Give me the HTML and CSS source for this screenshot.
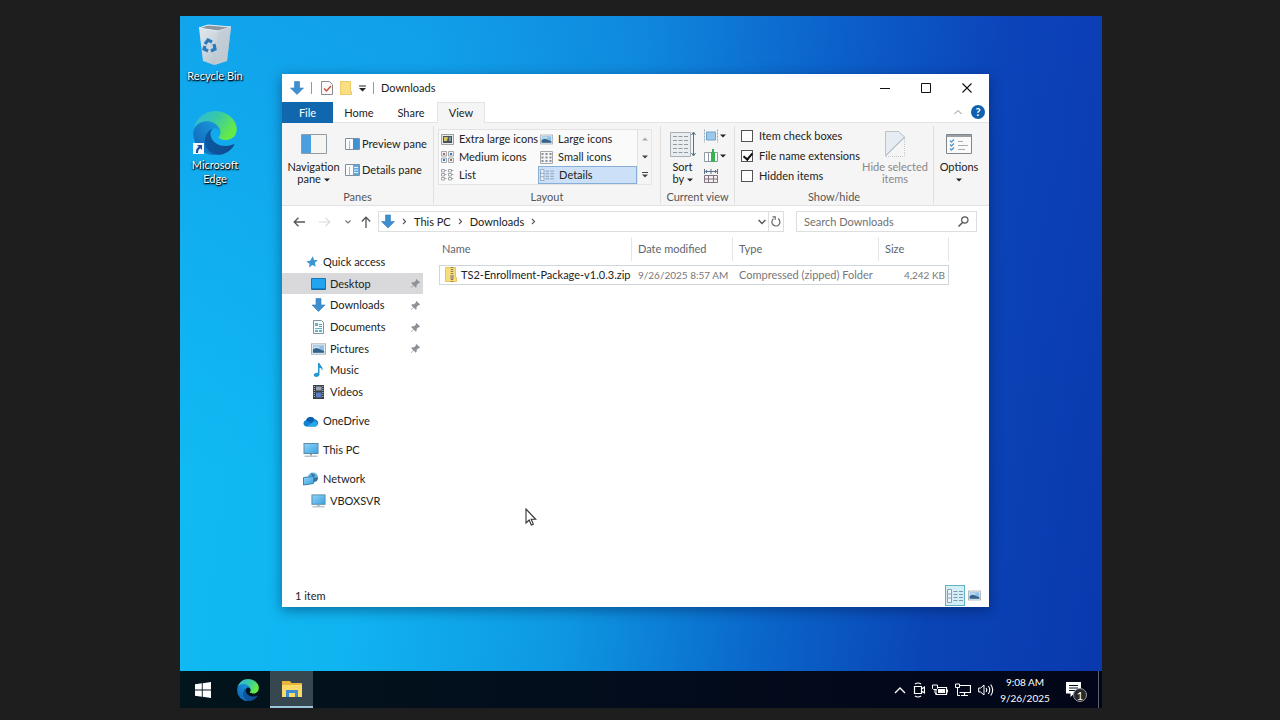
FILE: index.html
```html
<!DOCTYPE html>
<html lang="en">
<head>
    <meta charset="UTF-8">
    <title>Downloads</title>
    <link rel="stylesheet" href="styles.css">
</head>
<body>
    <!-- shared icons -->
    <svg class="defs" width="0" height="0">
        <defs>
            <linearGradient id="edge-a" x1="0" y1="0" x2="1" y2="0"><stop offset="0" stop-color="#0c59a4"/><stop offset="1" stop-color="#114a8b"/></linearGradient>
            <linearGradient id="edge-b" x1="1" y1="0" x2="0" y2="1"><stop offset="0" stop-color="#1b9de2"/><stop offset="1" stop-color="#0f62b5"/></linearGradient>
            <linearGradient id="edge-c" x1="0" y1="0" x2="1" y2="0.5"><stop offset="0" stop-color="#2fb6e6"/><stop offset="0.5" stop-color="#36c8a8"/><stop offset="1" stop-color="#66eb46"/></linearGradient>
            <linearGradient id="bin" x1="0" y1="0" x2="1" y2="1"><stop offset="0" stop-color="#e4ebf0"/><stop offset="1" stop-color="#aab8c4"/></linearGradient>
            <linearGradient id="monitor" x1="0" y1="0" x2="1" y2="1"><stop offset="0" stop-color="#8fd4f8"/><stop offset="1" stop-color="#3ba3e0"/></linearGradient>
        </defs>
        <symbol id="i-edge" viewBox="0 0 256 259">
            <path fill="url(#edge-a)" d="M235.68 195.47a93.73 93.73 0 0 1-10.54 4.71 101.87 101.87 0 0 1-35.9 6.46c-47.32 0-88.54-32.55-88.54-74.32A31.48 31.48 0 0 1 117.13 105c-42.8 1.8-53.8 46.4-53.8 72.53 0 73.88 68.09 81.37 82.76 81.37 7.91 0 19.84-2.3 27-4.56l1.31-.44a128.34 128.34 0 0 0 66.6-52.8 4 4 0 0 0-5.32-5.63Z"/>
            <path fill="url(#edge-b)" d="M105.73 246.42a79.2 79.2 0 0 1-22.74-21.34 80.72 80.72 0 0 1 29.53-120c3.12-1.47 8.45-4.13 15.54-4a32.35 32.35 0 0 1 25.69 13 31.88 31.88 0 0 1 6.36 18.66c0-.21 24.46-79.6-80-79.6-43.9 0-80 41.66-80 78.21a130.15 130.15 0 0 0 12.11 56 128 128 0 0 0 156.38 67.11 75.55 75.55 0 0 1-62.78-8Z"/>
            <path fill="url(#edge-c)" d="M152.33 148.86c-.81 1-3.3 2.5-3.3 5.66 0 2.61 1.7 5.12 4.72 7.23 14.38 10 41.49 8.68 41.56 8.68a59.56 59.56 0 0 0 30.27-8.35 61.38 61.38 0 0 0 30.43-52.88c.26-22.41-8-37.31-11.34-43.91C223.47 23.84 177.69 0 128 0A128 128 0 0 0 0 126.2c.48-36.54 36.8-66.05 80-66.05 3.5 0 23.46.34 42 10.07 16.34 8.58 24.9 18.94 30.85 29.21 6.18 10.67 7.28 24.15 7.28 29.52s-2.74 13.33-7.8 19.91Z"/>
        </symbol>
        <symbol id="i-down" viewBox="0 0 14 14"><path fill="#3f8fd0" stroke="#2f7cc0" stroke-width=".6" d="M4.500 .5h5v6.500h4L7 13.500.5 7h4z"/></symbol>
        <symbol id="i-pin" viewBox="0 0 12 12"><path fill="#8d9298" d="M7 1l4 4-1 .8-.8-.2-2 2 .1 2-1 1L4 8.300 1.300 11l-.5-.5L3.500 7.800 1.300 5.500l1-1 2.200.2 2-2-.3-.9z"/></symbol>
        <symbol id="i-pc" viewBox="0 0 16 14"><rect x="1" y=".5" width="14" height="10" fill="url(#monitor)" stroke="#5b8aa6"/><path d="M7 11h2v1.500H7z" fill="#8fa3ae"/><path d="M1.500 13.200h13" stroke="#9aa7ae"/></symbol>
        <symbol id="i-picture" viewBox="0 0 16 12"><rect x=".5" y=".5" width="15" height="11" fill="#f4f7f9" stroke="#a2acb4"/><rect x="2" y="2" width="12" height="8" fill="#8fbfe2"/><path d="M2 6.500l4-1.500 8 3V10H2z" fill="#35628a"/><path d="M3 3.500h6v1H3z" fill="#f2fbff"/></symbol>
        <symbol id="i-details" viewBox="0 0 16 14"><path d="M.5.500h4v13h-4zM.5 5h4M.5 9h4" fill="#eef4fa" stroke="#8aa0b8"/><path d="M6.500 2.500h4M12 2.500h4M6.500 5.500h4M12 5.500h4M6.500 8.500h4M12 8.500h4M6.500 11.500h4M12 11.500h4" stroke="#7f97b4"/></symbol>
        <symbol id="i-arrow" viewBox="0 0 6 4"><path d="M0 .5h6L3 3.500z" fill="currentColor"/></symbol>
        <symbol id="i-right" viewBox="0 0 5 7"><path d="M1 .8l2.500 2.700L1 6.200" fill="none" stroke="#555" stroke-width="1.200"/></symbol>
    </svg>

    <div class="screen">
        <main class="desktop">
            <div class="shortcuts">
                <a class="shortcut" href="#">
                    <svg width="36" height="42" viewBox="0 0 36 42">
                        <path d="M2 4l9-3 23 2-4 34-13 4L6 37z" fill="url(#bin)"/>
                        <path d="M2 4l9-3 23 2-13 4z" fill="#8a979f" stroke="#e8eff3"/>
                        <path d="M21 7l13-4-4 34-12 4z" fill="#c2ccd4" opacity=".7"/>
                        <g fill="none" stroke="#2879bd" stroke-width="3.200"><path d="M8 20l3-4 4 2"/><path d="M17 20l1 5-4 2"/><path d="M11 27l-4-2 1-3"/></g>
                    </svg>
                    <span>Recycle Bin</span>
                </a>
                <a class="shortcut" href="#">
                    <svg width="44" height="44" viewBox="0 0 44 44">
                        <use href="#i-edge" width="44" height="44"/>
                        <rect x="0" y="32" width="11" height="11" fill="#f5f7fa"/>
                        <path d="M4 34h5v5L7.300 37.300C5.500 38.500 5 40 5 42H3c-.4-3 .8-5 2.700-6.300z" fill="#1d4fa0"/>
                    </svg>
                    <span>Microsoft<br>Edge</span>
                </a>
            </div>

            <section class="window">
                <header class="titlebar">
                    <svg width="14" height="14"><use href="#i-down"/></svg>
                    <i class="bar"></i>
                    <svg class="check-icon" width="12" height="14" viewBox="0 0 12 14"><path d="M.5.500h8l3 3v10H.5z" fill="#fafafa" stroke="#8c8c8c"/><path d="M3 7.500l2.500 2.500L10 5" fill="none" stroke="#c8533e" stroke-width="1.500"/></svg>
                    <svg width="12" height="14" viewBox="0 0 12 14"><path d="M.5.500h10v10h1v3H.5z" fill="#f9df82" stroke="#e9cb68"/></svg>
                    <svg width="7" height="7" viewBox="0 0 7 7"><path d="M0 1h7" stroke="#222"/><path d="M0 3h7L3.500 6.500z" fill="#222"/></svg>
                    <i class="bar"></i>
                    <h1>Downloads</h1>
                    <div class="controls">
                        <button aria-label="Minimize"><svg width="10" height="10"><path d="M0 5.500h10" stroke="#111"/></svg></button>
                        <button aria-label="Maximize"><svg width="10" height="10"><path d="M.5.500h9v9h-9z" fill="none" stroke="#111"/></svg></button>
                        <button aria-label="Close"><svg width="10" height="10"><path d="M.5.500l9 9M9.500.500l-9 9" stroke="#111" stroke-width="1.100"/></svg></button>
                    </div>
                </header>

                <nav class="tabs">
                    <button class="file">File</button>
                    <button>Home</button>
                    <button>Share</button>
                    <button class="active">View</button>
                    <div class="help">
                        <svg width="8" height="6" viewBox="0 0 8 6"><path d="M.5 5L4 1.500 7.500 5" fill="none" stroke="#8a8a8a"/></svg>
                        <button aria-label="Help">?</button>
                    </div>
                </nav>

                <div class="ribbon">
                    <div class="group panes">
                        <div class="tools">
                            <button class="big">
                                <svg width="26" height="20" viewBox="0 0 26 20"><path d="M.5.500h25v19H.5z" fill="#f4f4f0" stroke="#909aa2"/><path d="M1 1h9v18H1z" fill="#4a9fdf"/></svg>
                                <span>Navigation<br>pane <svg class="arrow"><use href="#i-arrow"/></svg></span>
                            </button>
                            <div class="stack">
                                <button><svg width="15" height="12" viewBox="0 0 15 12"><path d="M.5.500h14v11H.5z" fill="#fbfbfb" stroke="#7c92a3"/><path d="M8 1h6v10H8z" fill="#3f93d4"/><path d="M4.500 3v8" stroke="#a5bccb"/></svg>Preview pane</button>
                                <button><svg width="15" height="12" viewBox="0 0 15 12"><path d="M.5.500h14v11H.5z" fill="#fbfbfb" stroke="#7c92a3"/><path d="M8 1h6v10H8z" fill="#62a9dc"/><path d="M4.500 3v8" stroke="#a5bccb"/><path d="M9 3.500h4M9 6h4M9 8.500h4" stroke="#e2f1fb"/></svg>Details pane</button>
                            </div>
                        </div>
                        <h2>Panes</h2>
                    </div>

                    <div class="group layout">
                        <div class="tools">
                            <div class="gallery">
                                <button><svg width="13" height="11" viewBox="0 0 13 11"><path d="M.5.500h12v10H.5z" fill="#e8ebe9" stroke="#9ba3a4"/><path d="M2 2h9v7H2z" fill="#47545b"/><path d="M3 3h4l-1 4H3z" fill="#d8c65c"/><path d="M8 3h2v4H8z" fill="#8898a0"/></svg>Extra large icons</button>
                                <button><svg width="13" height="11"><use href="#i-picture"/></svg>Large icons</button>
                                <button><svg width="13" height="12" viewBox="0 0 13 12"><path d="M.5.500h5v4.500h-5zM7.500.500h5v4.500h-5zM.5 7h5v4.500h-5zM7.500 7h5v4.500h-5z" fill="#eef1f5" stroke="#a3a9b0"/><path d="M2 2h2v2H2zM9 8h2v2H9z" fill="#b96a4a"/><path d="M9 2h2v2H9zM2 8h2v2H2z" fill="#3d79b7"/></svg>Medium icons</button>
                                <button><svg width="13" height="13" viewBox="0 0 13 13"><path d="M.5.500h12v12H.5z" fill="#f6f6f6" stroke="#a7a7a7"/><path d="M1.500 3h11M1.500 6.500h11M1.500 10h11" stroke="#858b91" stroke-width="2" stroke-dasharray="2 2"/></svg>Small icons</button>
                                <button><svg width="13" height="12" viewBox="0 0 13 12"><path d="M.5.500h3v2.500h-3zM.5 4.500h3V7h-3zM.5 8.500h3v2.500h-3zM7.500.500h3v2.500h-3zM7.500 4.500h3V7h-3zM7.500 8.500h3v2.500h-3zM3 1.500h2.500M3 5.500h2.500M3 9.500h2.500M10 1.500h2.500M10 5.500h2.500M10 9.500h2.500" fill="none" stroke="#a2a7ac"/></svg>List</button>
                                <button class="selected"><svg width="14" height="12"><use href="#i-details"/></svg>Details</button>
                            </div>
                            <div class="scroll">
                                <button aria-label="Scroll up"><svg class="arrow up"><use href="#i-arrow"/></svg></button>
                                <button aria-label="Scroll down"><svg class="arrow"><use href="#i-arrow"/></svg></button>
                                <button aria-label="More"><svg width="6" height="6" viewBox="0 0 6 6"><path d="M0 .5h6" stroke="#444"/><path d="M0 2.500h6L3 5.500z" fill="#444"/></svg></button>
                            </div>
                        </div>
                        <h2>Layout</h2>
                    </div>

                    <div class="group view">
                        <div class="tools">
                            <button class="big">
                                <svg width="26" height="26" viewBox="0 0 26 26"><path d="M.5 1.500h20v24H.5z" fill="#e9edf0" stroke="#a9b0b5"/><path d="M3 5.500h4m1.500 0h4m1.500 0h4M3 9.500h4m1.500 0h4m1.500 0h4M3 13.500h4m1.500 0h4m1.500 0h4M3 17.500h4m1.500 0h4m1.500 0h4M3 21.500h4m1.500 0h4m1.500 0h4" stroke="#8f9aa3"/><path d="M23.500 2v22M21.500 4l2-3 2 3M21.500 22l2 3 2-3" fill="none" stroke="#49748f"/></svg>
                                <span>Sort<br>by <svg class="arrow"><use href="#i-arrow"/></svg></span>
                            </button>
                            <div class="stack small">
                                <button aria-label="Group by"><svg width="14" height="14" viewBox="0 0 14 14"><path d="M2.500 3h9v8h-9z" fill="#9cc8ec" stroke="#6ea4cf"/><path d="M.5.500v13M13.500.500v13" stroke="#96a8b5" stroke-dasharray="2 1"/></svg><svg class="arrow"><use href="#i-arrow"/></svg></button>
                                <button aria-label="Add columns"><svg width="14" height="14" viewBox="0 0 14 14"><path d="M.5 3.500h13v9H.5zM4.500 3v10" fill="#fff" stroke="#8d9aa2"/><path d="M7 3h4v10H7zM8 0h2v3H8z" fill="#37b24c"/></svg><svg class="arrow"><use href="#i-arrow"/></svg></button>
                                <button aria-label="Size all columns to fit"><svg width="14" height="14" viewBox="0 0 14 14"><path d="M.5 6.500h13v7H.5zM1 10h12M4.500 7v6M9.500 7v6" fill="#f7eef0" stroke="#80757f"/><path d="M.5 0v5M13.500 0v5M1 2.500h12M7 0v5M3 1L1.500 2.500 3 4M11 1l1.500 1.500L11 4" fill="none" stroke="#5a7288"/></svg></button>
                            </div>
                        </div>
                        <h2>Current view</h2>
                    </div>

                    <div class="group showhide">
                        <div class="tools">
                            <div class="checks">
                                <label><input type="checkbox">Item check boxes</label>
                                <label><input type="checkbox" checked>File name extensions</label>
                                <label><input type="checkbox">Hidden items</label>
                            </div>
                            <button class="big" disabled>
                                <svg width="22" height="26" viewBox="0 0 22 26"><path d="M1.500.500h13l6 6" fill="none" stroke="#bcc3ca"/><path d="M1.500.500v24L20.500 6l-6-5.500z" fill="#e6ecf2" stroke="#bcc3ca"/><path d="M20.500 7v18.500H2" fill="none" stroke="#c2c7cc" stroke-dasharray="1 1"/><path d="M1.500 25L21 6" stroke="#a9bccc"/></svg>
                                <span>Hide selected<br>items</span>
                            </button>
                        </div>
                        <h2>Show/hide</h2>
                    </div>

                    <div class="group options">
                        <div class="tools">
                            <button class="big">
                                <svg width="26" height="20" viewBox="0 0 26 20"><path d="M.5.500h25v19H.5z" fill="#fafafa" stroke="#7f868c"/><path d="M1 2h24" stroke="#9aa0a6" stroke-width="2"/><path d="M4 6.500l1.500 1.500L8 5.500M4 10.500L5.500 12 8 9.500M4 14.500L5.500 16 8 13.500" fill="none" stroke="#5b94c8" stroke-width="1.300"/><path d="M12 7.500h5M12 11.500h10M12 15.500h7" stroke="#a5acb3"/></svg>
                                <span>Options<br><svg class="arrow"><use href="#i-arrow"/></svg></span>
                            </button>
                        </div>
                    </div>
                </div>

                <div class="addressbar">
                    <div class="history">
                        <button aria-label="Back"><svg width="12" height="10" viewBox="0 0 12 10"><path d="M12 5H1.500M5.500.800L1.200 5l4.300 4.200" fill="none" stroke="#555" stroke-width="1.300"/></svg></button>
                        <button aria-label="Forward"><svg width="12" height="10" viewBox="0 0 12 10"><path d="M0 5h10.500M6.500.800L10.800 5 6.500 9.200" fill="none" stroke="#dcdcdc" stroke-width="1.200"/></svg></button>
                        <button class="recent" aria-label="Recent locations"><svg width="6" height="4" viewBox="0 0 6 4"><path d="M.5.500L3 3 5.500.500" fill="none" stroke="#777" stroke-width="1.200"/></svg></button>
                        <button class="parent" aria-label="Up"><svg width="10" height="12" viewBox="0 0 10 12"><path d="M5 12V1.500M.8 5.500L5 1.200l4.200 4.300" fill="none" stroke="#555" stroke-width="1.300"/></svg></button>
                    </div>
                    <div class="path">
                        <svg width="14" height="15"><use href="#i-down"/></svg>
                        <svg class="chev"><use href="#i-right"/></svg>
                        <a href="#">This PC</a>
                        <svg class="chev"><use href="#i-right"/></svg>
                        <a href="#">Downloads</a>
                        <svg class="chev"><use href="#i-right"/></svg>
                        <button class="drop" aria-label="Previous locations"><svg width="8" height="6" viewBox="0 0 8 6"><path d="M.6 1L4 4.500 7.400 1" fill="none" stroke="#555" stroke-width="1.400"/></svg></button>
                        <button class="refresh" aria-label="Refresh"><svg width="10" height="11" viewBox="0 0 10 11"><path d="M2.500 2.800A4 4 0 1 0 7 2.600M1.500.800h2.700v3" fill="none" stroke="#666" stroke-width="1.200"/></svg></button>
                    </div>
                    <div class="search">
                        <input type="text" placeholder="Search Downloads" aria-label="Search Downloads">
                        <svg width="11" height="11" viewBox="0 0 11 11"><circle cx="6.800" cy="4" r="3.200" fill="none" stroke="#555" stroke-width="1.200"/><path d="M4.500 6.500L.5 10.500" stroke="#555" stroke-width="1.500"/></svg>
                    </div>
                </div>

                <div class="content">
                    <aside class="sidebar">
                        <ul class="quick">
                            <li><svg width="12" height="12" viewBox="0 0 12 12"><path fill="#3a97d3" d="M6.800.300l1.300 3.600 3.700.300-2.900 2.500.8 4-3.300-1.700L3 11.500l.5-3.700L.3 5.400l3.800-.6z"/></svg><a href="#">Quick access</a></li>
                            <li class="sub current"><svg width="15" height="12" viewBox="0 0 15 12"><path d="M.5.500h14v11H.5z" fill="#22a5ee" stroke="#1579b8"/><path d="M1 11h13" stroke="#0d5f97"/></svg><a href="#">Desktop</a><svg class="pin"><use href="#i-pin"/></svg></li>
                            <li class="sub"><svg width="15" height="14"><use href="#i-down"/></svg><a href="#">Downloads</a><svg class="pin"><use href="#i-pin"/></svg></li>
                            <li class="sub"><svg width="15" height="14" viewBox="0 0 15 14"><path d="M2.500.500h8l2 2v11h-10z" fill="#f7fbfc" stroke="#7f959d"/><path d="M4 3h3v3H4zM4 8h7v1H4zM4 10h3v2H4zM8 10h3v2H8z" fill="#62b3c4"/><path d="M8 4.500h3M8 6.500h3" stroke="#5b9fb3"/></svg><a href="#">Documents</a><svg class="pin"><use href="#i-pin"/></svg></li>
                            <li class="sub"><svg width="15" height="12"><use href="#i-picture"/></svg><a href="#">Pictures</a><svg class="pin"><use href="#i-pin"/></svg></li>
                            <li class="sub"><svg width="15" height="14" viewBox="0 0 15 14"><path d="M7 0h1.500c.5 2.500 4 3.500 2.800 8-.3-2-1.300-3-2.800-3.300v6.500c0 1.600-1.500 2.800-3.300 2.800-1.500 0-2.500-.8-2.500-1.900 0-1.500 2-2.600 4.300-2.300z" fill="#2496d2"/></svg><a href="#">Music</a></li>
                            <li class="sub"><svg width="15" height="14" viewBox="0 0 15 14"><path d="M2 0h11v14H2z" fill="#3b3f47"/><path d="M5 1.500h5.500v4H5z" fill="#9aa6b5"/><path d="M5 7.500h5.500v5H5z" fill="#5a7fc4"/><path d="M3.300 1v12M11.800 1v12" stroke="#c3c6ca" stroke-dasharray="1 1"/></svg><a href="#">Videos</a></li>
                        </ul>
                        <ul>
                            <li><svg width="16" height="11" viewBox="0 0 16 11"><path d="M3.500 10.500A3.200 3.200 0 0 1 3 4.200 4.700 4.700 0 0 1 11.500 3.200a3.800 3.800 0 0 1 1.200 7.300z" fill="#1480d0"/><path d="M3.500 10.500l8.500-5.500A3 3 0 0 1 12.700 10.500z" fill="#28a8ea"/><path d="M3 4.200A4.700 4.700 0 0 1 11.500 3.200L8.500 7z" fill="#0a5fae"/></svg><a href="#">OneDrive</a></li>
                        </ul>
                        <ul>
                            <li><svg width="16" height="14"><use href="#i-pc"/></svg><a href="#">This PC</a></li>
                        </ul>
                        <ul>
                            <li><svg width="16" height="14" viewBox="0 0 16 14"><circle cx="10" cy="5.500" r="5" fill="#5fb4e4"/><path d="M8 1l4 2-1 3 4-1-1 4-4 1z" fill="#356f9c"/><path d="M.5 5.500l10-1v7l-10 1.500z" fill="url(#monitor)" stroke="#3f82ad"/></svg><a href="#">Network</a></li>
                            <li class="sub"><svg width="15" height="14"><use href="#i-pc"/></svg><a href="#">VBOXSVR</a></li>
                        </ul>
                    </aside>

                    <table class="files">
                        <thead>
                            <tr><th class="name">Name</th><th class="date">Date modified</th><th class="type">Type</th><th class="size">Size</th></tr>
                        </thead>
                        <tbody>
                            <tr>
                                <td class="name"><svg width="12" height="15" viewBox="0 0 12 15"><path d="M.5.500h10v10h1v4H.5z" fill="#f9dc7c" stroke="#e8c55c"/><path d="M7 0v15" stroke="#8a7c58" stroke-width="2.500" stroke-dasharray="1 1"/><path d="M5.500 8h3v4h-3z" fill="#a59b80"/></svg>TS2-Enrollment-Package-v1.0.3.zip</td>
                                <td class="date">9/26/2025 8:57 AM</td>
                                <td>Compressed (zipped) Folder</td>
                                <td class="num">4,242 KB</td>
                            </tr>
                        </tbody>
                    </table>
                </div>

                <footer class="status">
                    <span>1 item</span>
                    <button class="on" aria-label="Details view"><svg width="16" height="14"><use href="#i-details"/></svg></button>
                    <button aria-label="Large icons view"><svg width="13" height="11"><use href="#i-picture"/></svg></button>
                </footer>
            </section>

            <svg class="cursor" width="12" height="18" viewBox="0 0 12 18"><path d="M1 1v14l3.200-3 2.100 5 2-.9-2.100-4.800h4.500z" fill="#fff" stroke="#333" stroke-width="1.100"/></svg>
        </main>

        <footer class="taskbar">
            <button aria-label="Start"><svg width="16" height="16" viewBox="0 0 16 16"><path d="M0 2.300l6.800-1v6.200H0zM7.700 1.200L16 0v7.500H7.700zM0 8.400h6.800v6.300L0 13.700zM7.700 8.400H16V16l-8.300-1.200z" fill="#fff"/></svg></button>
            <button aria-label="Microsoft Edge"><svg width="22" height="22"><use href="#i-edge"/></svg></button>
            <button class="open" aria-label="File Explorer"><svg width="20" height="18" viewBox="0 0 20 18"><path d="M0 1h8l1.500 2H20v14H0z" fill="#e8b53c"/><path d="M0 5h20v12H0z" fill="#fbd968"/><path d="M4 10h12v7h-3v-4H7v4H4z" fill="#3d8ed0"/></svg></button>
            <div class="tray">
                <svg width="12" height="8" viewBox="0 0 12 8"><path d="M1 7l5-5 5 5" fill="none" stroke="#fff" stroke-width="1.300"/></svg>
                <svg width="12" height="16" viewBox="0 0 12 16"><path d="M1.500 4.500h7v7h-7zM8.500 7l3-2v6l-3-2M2 2q3-2 6 0M2 14q3 2 6 0" fill="none" stroke="#fff" stroke-width="1.200"/></svg>
                <svg width="16" height="12" viewBox="0 0 16 12"><path d="M4 3.500h10.500v7H4z" fill="none" stroke="#fff" stroke-width="1.200"/><path d="M6 5h7v4H6zM14.500 5.500H16v3h-1.500z" fill="#fff"/><path d="M.5 1h5v3.500l-1 1h-3l-1-1zM3 5v4h2" fill="#06121f" stroke="#fff"/></svg>
                <svg width="16" height="14" viewBox="0 0 16 14"><path d="M5 2.500h10.500v7H4.500M9.500 9.500v3M6 12.500h7" fill="none" stroke="#fff" stroke-width="1.200"/><path d="M.5 1h4v3.500h-4zM2.500 4.500v8H5" fill="none" stroke="#fff"/></svg>
                <svg width="16" height="14" viewBox="0 0 16 14"><path d="M.7 5h2L6 2v10L2.700 9h-2z" fill="none" stroke="#fff"/><path d="M8 5q1.500 2 0 4M10.300 3q3 4 0 8M12.700 1.500q4 5.500 0 11" fill="none" stroke="#fff" stroke-width="1.100"/></svg>
            </div>
            <time>9:08 AM<br>9/26/2025</time>
            <button class="notify" aria-label="Notifications">
                <svg width="15" height="15" viewBox="0 0 15 15"><path d="M0 0h15v11.500H8L4.500 15v-3.500H0z" fill="#fff"/><path d="M3 3.500h9M3 6h9M3 8.500h6" stroke="#071022"/></svg>
                <span>1</span>
            </button>
            <button class="peek" aria-label="Show desktop"></button>
        </footer>
    </div>
</body>
</html>
```
FILE: styles.css
```css
* {
    box-sizing: border-box;
}
body {
    margin: 0;
    padding: 16px 178px 12px 180px;
    min-height: 100vh;
    display: flex;
    background: #1e1e1e;
    font-family: "Segoe UI", Lato, "Open Sans", sans-serif;
    font-size: 11px;
    line-height: 12px;
    color: #222;
}
button {
    font: inherit;
    color: inherit;
    background: none;
    border: 0;
    padding: 0;
    display: flex;
    align-items: center;
    white-space: nowrap;
}
a {
    color: inherit;
    text-decoration: none;
}
h1, h2, ul {
    margin: 0;
    padding: 0;
    font-size: 11px;
    font-weight: normal;
    list-style: none;
}
svg {
    flex: none;
}
.defs {
    position: absolute;
}
.screen {
    flex: 1;
    display: flex;
    flex-direction: column;
}

/* desktop */
.desktop {
    flex: 1;
    position: relative;
    background:
        linear-gradient(180deg, rgba(20, 60, 200, 0.18), rgba(20, 60, 200, 0) 70%),
        linear-gradient(98deg, #10bcf4 0%, #10b4f0 25%, #0e98e2 46%, #0a66ca 66%, #0a45b6 82%, #0a38ae 100%);
}
.shortcuts {
    width: 70px;
    padding-top: 8px;
    display: flex;
    flex-direction: column;
    gap: 28px;
}
.shortcut {
    display: flex;
    flex-direction: column;
    align-items: center;
    gap: 3px;
    line-height: 14px;
    text-align: center;
    color: #fff;
    text-shadow: 0 1px 2px #000, 1px 1px 1px #000;
}
.cursor {
    position: absolute;
    left: 345px;
    top: 492px;
}

/* explorer window */
.window {
    position: absolute;
    left: 102px;
    top: 58px;
    right: 113px;
    bottom: 64px;
    display: flex;
    flex-direction: column;
    background: #fff;
    box-shadow: 0 3px 12px rgba(0, 20, 60, 0.45);
}
.titlebar {
    height: 28px;
    padding: 0 2px 0 8px;
    display: flex;
    align-items: center;
    gap: 7px;
}
.titlebar h1 {
    line-height: 16px;
}
.bar {
    width: 1px;
    height: 12px;
    background: #999;
}
.check-icon {
    margin-left: 2px;
}
.controls {
    margin-left: auto;
    display: flex;
}
.controls button {
    width: 41px;
    height: 28px;
    justify-content: center;
}
.tabs {
    height: 21px;
    display: flex;
    border-bottom: 1px solid #e4e4e4;
}
.tabs > button {
    width: 52px;
    height: 21px;
    justify-content: center;
    border: 1px solid transparent;
    border-bottom: 0;
}
.tabs .file {
    width: 51px;
    background: #1167ae;
    color: #fff;
}
.tabs .active {
    width: 48px;
    background: #f5f5f5;
    border-color: #e4e4e4;
}
.help {
    margin-left: auto;
    padding-right: 4px;
    display: flex;
    align-items: center;
    gap: 9px;
}
.help button {
    width: 14px;
    height: 14px;
    border-radius: 50%;
    background: #0f62b0;
    color: #fff;
    font-weight: bold;
    justify-content: center;
}

/* ribbon */
.ribbon {
    height: 83px;
    padding: 3px 0 1px;
    display: flex;
    background: #f5f5f5;
    border-bottom: 1px solid #e2e2e2;
}
.group {
    display: flex;
    flex-direction: column;
    border-right: 1px solid #e0e0e0;
}
.group h2 {
    text-align: center;
    line-height: 14px;
    color: #555;
}
.tools {
    flex: 1;
    display: flex;
}
.panes {
    width: 152px;
}
.layout {
    width: 227px;
}
.view {
    width: 74px;
}
.showhide {
    width: 199px;
}
.options {
    width: 51px;
    border-right: 0;
}
.big {
    flex-direction: column;
    justify-content: flex-end;
    gap: 7px;
    padding-bottom: 5px;
    text-align: center;
}
.big:disabled {
    color: #888;
}
.arrow {
    width: 6px;
    height: 4px;
    vertical-align: middle;
}
.arrow.up {
    transform: rotate(180deg);
    color: #aaa;
}
.panes .big {
    width: 63px;
}
.stack {
    display: flex;
    flex-direction: column;
    gap: 10px;
    padding-top: 10px;
}
.stack button {
    height: 16px;
    gap: 2px;
}
.stack.small {
    gap: 4px;
    padding-top: 2px;
}
.layout .tools {
    padding: 3px 8px 5px 4px;
}
.gallery {
    flex: 1;
    display: grid;
    grid-template-columns: 1fr 1fr;
    grid-template-rows: repeat(3, 18px);
    background: #fafafa;
    border: 1px solid #e2e2e2;
}
.gallery button {
    padding-left: 2px;
    gap: 5px;
}
.gallery .selected {
    background: #cce1f7;
    outline: 1px solid #86aed6;
    outline-offset: -1px;
}
.scroll {
    width: 14px;
    display: flex;
    flex-direction: column;
    border: 1px solid #e6e6e6;
    border-left: 0;
}
.scroll button {
    height: 18px;
    justify-content: center;
    color: #444;
}
.view .big {
    width: 43px;
}
.view .big,
.showhide .big {
    gap: 4px;
}
.checks {
    width: 124px;
    display: flex;
    flex-direction: column;
    gap: 4px;
    padding: 2px 0 0 6px;
}
.checks label {
    height: 16px;
    display: flex;
    align-items: center;
    gap: 6px;
    white-space: nowrap;
}
.checks input {
    appearance: none;
    flex: none;
    width: 12px;
    height: 12px;
    margin: 0;
    border: 1px solid #555;
    background: #fff;
}
.checks input:checked::before {
    content: "";
    display: block;
    width: 4px;
    height: 7px;
    margin: 0 0 0 3px;
    border: solid #111;
    border-width: 0 2px 2px 0;
    transform: rotate(40deg);
}
.showhide .big {
    width: 72px;
}
.options .big {
    width: 50px;
}
.options .tools {
    flex: none;
    height: 64px;
}

/* address bar */
.addressbar {
    height: 31px;
    padding: 0 12px 0 11px;
    display: flex;
    align-items: center;
}
.history {
    width: 85px;
    display: flex;
    align-items: center;
    gap: 14px;
}
.history .parent {
    margin-left: -4px;
}
.path {
    flex: 1;
    height: 21px;
    display: flex;
    align-items: center;
    gap: 7px;
    padding-left: 2px;
    border: 1px solid #dedede;
}
.chev {
    width: 5px;
    height: 7px;
}
.path .drop {
    margin-left: auto;
}
.path .refresh {
    align-self: stretch;
    width: 15px;
    margin-left: -5px;
    justify-content: center;
    border-left: 1px solid #dedede;
}
.search {
    width: 181px;
    height: 21px;
    margin-left: 12px;
    padding: 0 7px;
    display: flex;
    align-items: center;
    border: 1px solid #dedede;
}
.search input {
    flex: 1;
    min-width: 0;
    padding: 0;
    border: 0;
    outline: 0;
    font: inherit;
}
.search input::placeholder {
    color: #707070;
}

/* content */
.content {
    flex: 1;
    display: flex;
    padding-right: 12px;
}
.sidebar {
    width: 141px;
    padding-top: 14px;
    display: flex;
    flex-direction: column;
    gap: 7px;
}
.sidebar li {
    height: 22px;
    padding: 0 2px 0 21px;
    display: flex;
    align-items: center;
    gap: 4px;
}
.sidebar li.sub {
    padding-left: 29px;
}
.sidebar .quick {
    height: 152px;
    display: flex;
    flex-direction: column;
}
.sidebar .quick li {
    flex: 1;
}
.sidebar .quick li:first-child {
    padding-left: 24px;
    gap: 5px;
}
.sidebar .current {
    background: #d9d9dc;
}
.pin {
    width: 11px;
    height: 11px;
    margin-left: auto;
}
.files {
    width: 510px;
    margin: -4px 0 0 16px;
    align-self: flex-start;
    table-layout: fixed;
    border-collapse: separate;
    border-spacing: 0 4px;
    white-space: nowrap;
}
.files th {
    height: 24px;
    padding: 0 6px;
    text-align: left;
    font-weight: normal;
    color: #5c6670;
    border-right: 1px solid #e6e6e6;
}
.files th.name {
    width: 193px;
    padding-left: 3px;
}
.files th.date {
    width: 101px;
}
.files th.type {
    width: 146px;
}
.files td {
    height: 20px;
    padding: 0 6px;
    color: #777;
    border: solid #cfd6dc;
    border-width: 1px 0;
}
.files td.name {
    padding-left: 5px;
    line-height: 16px;
    color: #222;
    border-left-width: 1px;
}
.files td.name svg {
    margin-right: 4px;
    vertical-align: top;
}
.files td.date {
    font-size: 10px;
}
.files td.num {
    padding-right: 3px;
    font-size: 10px;
    text-align: right;
    border-right-width: 1px;
}
.status {
    height: 22px;
    padding: 0 8px 1px 13px;
    display: flex;
    align-items: center;
    gap: 3px;
}
.status span {
    flex: 1;
}
.status button {
    height: 21px;
    justify-content: center;
}
.status .on {
    width: 20px;
    background: #d3eef5;
    border: 1px solid #5fb3c5;
}

/* taskbar */
.taskbar {
    height: 37px;
    padding-right: 3px;
    display: flex;
    align-items: center;
    background: linear-gradient(90deg, #02141c, #030c1c 50%, #020618);
    color: #fff;
}
.taskbar > button {
    width: 45px;
    height: 37px;
    justify-content: center;
}
.taskbar > .open {
    width: 43px;
    background: #37474f;
    border-bottom: 2px solid #9cc4dc;
}
.tray {
    margin-left: auto;
    display: flex;
    align-items: center;
    gap: 7px;
}
.taskbar time {
    width: 62px;
    font-size: 10px;
    line-height: 16px;
    text-align: center;
}
.taskbar > .notify {
    position: relative;
    width: 42px;
    padding-right: 8px;
}
.notify span {
    position: absolute;
    left: 17px;
    top: 17px;
    width: 14px;
    height: 14px;
    line-height: 13px;
    border: 1px solid #999;
    border-radius: 50%;
    background: #26282e;
}
.taskbar > .peek {
    width: 1px;
    background: #5a6270;
}
```
